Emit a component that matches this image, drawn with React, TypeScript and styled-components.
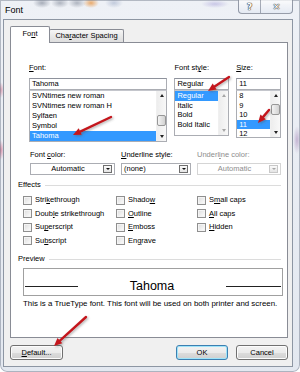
import React from "react";
import styled, { createGlobalStyle } from "styled-components";

const GlobalStyle = createGlobalStyle`
  * { box-sizing: border-box; }
  html, body { margin: 0; padding: 0; background: #ffffff; }
  body {
    font-family: "Liberation Sans", Arial, sans-serif;
    font-size: 7.5px;
    line-height: 10px;
    color: #000;
  }
`;

const Window = styled.div`
  position: relative;
  width: 300px;
  height: 372px;
  display: flex;
  flex-direction: column;
  padding: 0 7px 5px 3px;
  border-radius: 0 0 7px 7px;
  background:
    radial-gradient(ellipse 9px 5px at 42px 3px, rgba(80, 90, 110, 0.45), transparent),
    radial-gradient(ellipse 9px 5px at 60px 3px, rgba(80, 90, 110, 0.4), transparent),
    radial-gradient(ellipse 9px 5px at 77px 3px, rgba(80, 90, 110, 0.4), transparent),
    radial-gradient(ellipse 8px 5px at 91px 3px, rgba(230, 140, 50, 0.7), transparent),
    radial-gradient(ellipse 9px 5px at 114px 3px, rgba(110, 130, 170, 0.35), transparent),
    radial-gradient(ellipse 14px 4px at 215px 4px, rgba(130, 120, 200, 0.35), transparent),
    radial-gradient(ellipse 3px 8px at 1px 90px, rgba(200, 90, 120, 0.5), transparent),
    radial-gradient(ellipse 3px 10px at 1px 150px, rgba(200, 60, 100, 0.5), transparent),
    radial-gradient(ellipse 4px 14px at 297px 140px, rgba(150, 110, 170, 0.45), transparent),
    linear-gradient(180deg, #eef1f6 0%, #e3e8f0 100%);
  box-shadow: inset 0 0 0 1px rgba(70, 80, 100, 0.35);
`;

const TitleBar = styled.div`
  height: 19px;
  display: flex;
  align-items: flex-start;
`;

const Title = styled.span`
  margin: 5px 0 0 2px;
  font-size: 9px;
  line-height: 10px;
`;

const Caption = styled.div`
  margin-left: auto;
  display: flex;
  height: 14px;
  border: 1px solid rgba(70, 80, 100, 0.55);
  border-top: none;
  border-radius: 0 0 4px 4px;
  background: linear-gradient(180deg, rgba(255, 255, 255, 0.7), rgba(222, 229, 240, 0.6));
  overflow: hidden;
`;

const CaptionButton = styled.div<{ $w: number }>`
  width: ${(p) => p.$w}px;
  display: flex;
  align-items: center;
  justify-content: center;
  font-family: "DejaVu Sans", sans-serif;
  font-weight: bold;
  font-size: 9px;
  color: #fff;
  text-shadow: 0 0 1px #333, 0 0 1px #333, 0 0 1px #333;
  & + & {
    border-left: 1px solid rgba(70, 80, 100, 0.45);
  }
`;

const Client = styled.div`
  flex: 1;
  display: flex;
  flex-direction: column;
  background: #f0f0f0;
  border: 1px solid #8d96a3;
  padding: 6px 4px 6px 6px;
`;

const TabStrip = styled.div`
  height: 17px;
  display: flex;
  align-items: flex-end;
  position: relative;
  z-index: 1;
`;

const Tab = styled.div<{ $active?: boolean; $w: number }>`
  width: ${(p) => p.$w}px;
  height: ${(p) => (p.$active ? 17 : 13)}px;
  margin-bottom: ${(p) => (p.$active ? 0 : 1)}px;
  margin-left: ${(p) => (p.$active ? 0 : -1)}px;
  display: flex;
  align-items: center;
  justify-content: center;
  border: 1px solid #898c95;
  border-bottom: none;
  border-radius: 2px 2px 0 0;
  background: ${(p) =>
    p.$active ? "#fff" : "linear-gradient(180deg, #f6f6f6 0%, #e7e7e7 55%, #dedede 100%)"};
  padding-bottom: ${(p) => (p.$active ? 2 : 0)}px;
`;

const Panel = styled.div`
  flex: 1;
  margin-top: -1px;
  background: #fff;
  border: 1px solid #898c95;
  display: flex;
  flex-direction: column;
  padding: 20px 6px 0 7px;
`;

const Key = styled.span`
  text-decoration: underline;
`;

const FieldRow = styled.div<{ $left: number; $gap: number; $top?: number }>`
  display: flex;
  gap: ${(p) => p.$gap}px;
  margin-left: ${(p) => p.$left}px;
  margin-top: ${(p) => p.$top ?? 0}px;
  align-items: flex-start;
`;

const Field = styled.div<{ $w: number }>`
  width: ${(p) => p.$w}px;
  display: flex;
  flex-direction: column;
`;

const Label = styled.div<{ $disabled?: boolean; $gap: number }>`
  height: 10px;
  margin-bottom: ${(p) => p.$gap}px;
  color: ${(p) => (p.$disabled ? "#8d8d8d" : "#000")};
  white-space: nowrap;
`;

const TextBox = styled.div`
  height: 12px;
  border: 1px solid #abadb3;
  border-top-color: #8e929c;
  padding: 0 2px;
  line-height: 10px;
`;

const ListBox = styled.div<{ $h: number }>`
  height: ${(p) => p.$h}px;
  border: 1px solid #abadb3;
  border-top-color: #c4c6cc;
  display: flex;
`;

const Items = styled.div`
  flex: 1;
  display: flex;
  flex-direction: column;
  min-width: 0;
`;

const Item = styled.div<{ $h: number; $selected?: boolean }>`
  height: ${(p) => p.$h}px;
  line-height: ${(p) => p.$h}px;
  padding-left: 2px;
  white-space: nowrap;
  background: ${(p) => (p.$selected ? "#3399ff" : "transparent")};
  color: ${(p) => (p.$selected ? "#fff" : "#000")};
`;

const ScrollBar = styled.div`
  width: 10px;
  display: flex;
  flex-direction: column;
  background: linear-gradient(90deg, #ededed, #f8f8f8);
  border-left: 1px solid #f0f0f0;
`;

const ScrollArrow = styled.div<{ $down?: boolean; $disabled?: boolean }>`
  height: 9px;
  display: flex;
  align-items: center;
  justify-content: center;
  &::before {
    content: "";
    border-left: 2.5px solid transparent;
    border-right: 2.5px solid transparent;
    ${(p) => (p.$down ? "border-top" : "border-bottom")}: 3px solid
      ${(p) => (p.$disabled ? "#a6a6a6" : "#222")};
  }
`;

const Track = styled.div`
  flex: 1;
  display: flex;
  flex-direction: column;
`;

const Thumb = styled.div<{ $top: number }>`
  margin-top: ${(p) => p.$top}px;
  height: 11px;
  border: 1px solid #979797;
  border-radius: 2px;
  background: linear-gradient(90deg, #f4f4f4, #e2e2e2 50%, #d2d2d2);
`;

const Dropdown = styled.div<{ $disabled?: boolean }>`
  height: 12px;
  display: flex;
  align-items: center;
  border: 1px solid ${(p) => (p.$disabled ? "#d5d5d5" : "#abadb3")};
  color: ${(p) => (p.$disabled ? "#8d8d8d" : "#000")};
`;

const DropText = styled.div<{ $center?: boolean }>`
  flex: 1;
  padding-left: 2px;
  text-align: ${(p) => (p.$center ? "center" : "left")};
  line-height: 10px;
`;

const DropButton = styled.div<{ $disabled?: boolean }>`
  width: 9px;
  height: 8px;
  margin-right: 2px;
  display: flex;
  align-items: center;
  justify-content: center;
  border: 1px solid ${(p) => (p.$disabled ? "#c8c8c8" : "#6f6f6f")};
  background: linear-gradient(180deg, #fbfbfb, #e4e4e4);
  &::before {
    content: "";
    border-left: 2px solid transparent;
    border-right: 2px solid transparent;
    border-top: 2.5px solid ${(p) => (p.$disabled ? "#a6a6a6" : "#111")};
  }
`;

const GroupHeading = styled.div<{ $top: number }>`
  height: 10px;
  margin-top: ${(p) => p.$top}px;
  display: flex;
  align-items: center;
  &::after {
    content: "";
    flex: 1;
    margin-left: 4px;
    border-top: 1px solid #dcdcdc;
  }
`;

const EffectsGrid = styled.div`
  display: grid;
  grid-template-columns: 93px 81px 1fr;
  grid-template-rows: repeat(4, 13.5px);
  grid-auto-flow: column;
  margin: 3.5px 0 0 5px;
`;

const Check = styled.div`
  display: flex;
  align-items: center;
  white-space: nowrap;
`;

const CheckBox = styled.span`
  width: 9px;
  height: 9px;
  margin-right: 3px;
  border: 1px solid #8f8f8f;
  background: linear-gradient(135deg, #dcdcdc, #fefefe);
  box-shadow: inset 0 0 0 1px #f4f4f4;
`;

const PreviewBox = styled.div`
  width: 260px;
  height: 28px;
  margin: 4px 0 0 5px;
  border: 1px solid #a0a0a0;
  display: flex;
  align-items: flex-end;
  justify-content: space-between;
  padding: 0 1px 8px;
`;

const Rule = styled.div<{ $w: number }>`
  width: ${(p) => p.$w}px;
  height: 1px;
  background: #222;
`;

const PreviewText = styled.div`
  font-size: 12.5px;
  line-height: 14px;
  margin-bottom: -6px;
`;

const Description = styled.div`
  margin: 3px 0 0 5px;
  font-size: 7.9px;
  white-space: nowrap;
`;

const ButtonRow = styled.div`
  height: 15px;
  margin-top: 7px;
  display: flex;
  gap: 8px;
`;

const Button = styled.div<{ $default?: boolean; $push?: boolean }>`
  width: ${(p) => (p.$push ? 52 : 53)}px;
  margin-left: ${(p) => (p.$push && p.$default ? "auto" : "0")};
  display: flex;
  align-items: center;
  justify-content: center;
  border: 1px solid ${(p) => (p.$default ? "#3c7fb1" : "#707070")};
  border-radius: 3px;
  background: linear-gradient(180deg, #f2f2f2 0%, #ebebeb 50%, #dddddd 51%, #cfcfcf 100%);
  box-shadow: inset 0 0 0 1px ${(p) => (p.$default ? "#9ee4fa" : "#fcfcfc")};
`;

const Overlay = styled.svg`
  position: absolute;
  left: 0;
  top: 0;
  pointer-events: none;
`;

type ArrowProps = { x1: number; y1: number; x2: number; y2: number };

const arrows: ArrowProps[] = [
  { x1: 111, y1: 117, x2: 73, y2: 135 },
  { x1: 229, y1: 77, x2: 208, y2: 91 },
  { x1: 269, y1: 110, x2: 258, y2: 123 },
  { x1: 86, y1: 317, x2: 54, y2: 346 },
];

function Arrow({ x1, y1, x2, y2 }: ArrowProps) {
  const len = Math.hypot(x2 - x1, y2 - y1);
  const ux = (x2 - x1) / len;
  const uy = (y2 - y1) / len;
  const bx = x2 - ux * 8;
  const by = y2 - uy * 8;
  const nx = -uy * 3.6;
  const ny = ux * 3.6;
  return (
    <g>
      <line x1={x1} y1={y1} x2={bx} y2={by} stroke="#c4151c" strokeWidth={2.4} strokeLinecap="round" />
      <polygon points={`${x2},${y2} ${bx + nx},${by + ny} ${bx - nx},${by - ny}`} fill="#c4151c" />
    </g>
  );
}

const fonts = ["SVNtimes new roman", "SVNtimes new roman H", "Sylfaen", "Symbol", "Tahoma"];
const styles = ["Regular", "Italic", "Bold", "Bold Italic"];
const sizes = ["8", "9", "10", "11", "12"];

const effects: [string, string, string][] = [
  ["Stri", "k", "ethrough"],
  ["Doub", "l", "e strikethrough"],
  ["Su", "p", "erscript"],
  ["Su", "b", "script"],
  ["Shado", "w", ""],
  ["", "O", "utline"],
  ["", "E", "mboss"],
  ["En", "g", "rave"],
  ["S", "m", "all caps"],
  ["", "A", "ll caps"],
  ["", "H", "idden"],
];

function ListScroll({ thumb, disabled }: { thumb?: number; disabled?: boolean }) {
  return (
    <ScrollBar>
      <ScrollArrow $disabled={disabled} />
      <Track>{thumb !== undefined && <Thumb $top={thumb} />}</Track>
      <ScrollArrow $down $disabled={disabled} />
    </ScrollBar>
  );
}

export default function App() {
  return (
    <>
      <GlobalStyle />
      <Window>
        <TitleBar>
          <Title>Font</Title>
          <Caption>
            <CaptionButton $w={21}>?</CaptionButton>
            <CaptionButton $w={32}>✕</CaptionButton>
          </Caption>
        </TitleBar>
        <Client>
          <TabStrip>
            <Tab $active $w={40}>
              Fo<Key>n</Key>t
            </Tab>
            <Tab $w={75}>
              Cha<Key>r</Key>acter Spacing
            </Tab>
          </TabStrip>
          <Panel>
            <FieldRow $left={11} $gap={7}>
              <Field $w={139}>
                <Label $gap={5}>
                  <Key>F</Key>ont:
                </Label>
                <TextBox>Tahoma</TextBox>
                <ListBox $h={52}>
                  <Items>
                    {fonts.map((f) => (
                      <Item key={f} $h={10} $selected={f === "Tahoma"}>
                        {f}
                      </Item>
                    ))}
                  </Items>
                  <ListScroll thumb={15} />
                </ListBox>
              </Field>
              <Field $w={55}>
                <Label $gap={5}>
                  Font st<Key>y</Key>le:
                </Label>
                <TextBox>Regular</TextBox>
                <ListBox $h={46}>
                  <Items>
                    {styles.map((s) => (
                      <Item key={s} $h={9.5} $selected={s === "Regular"}>
                        {s}
                      </Item>
                    ))}
                  </Items>
                  <ListScroll disabled />
                </ListBox>
              </Field>
              <Field $w={45}>
                <Label $gap={5}>
                  <Key>S</Key>ize:
                </Label>
                <TextBox>11</TextBox>
                <ListBox $h={48}>
                  <Items>
                    {sizes.map((s) => (
                      <Item key={s} $h={9.5} $selected={s === "11"}>
                        {s}
                      </Item>
                    ))}
                  </Items>
                  <ListScroll thumb={4} />
                </ListBox>
              </Field>
            </FieldRow>

            <FieldRow $left={12} $gap={6} $top={8}>
              <Field $w={85}>
                <Label $gap={3}>
                  Font <Key>c</Key>olor:
                </Label>
                <Dropdown>
                  <DropText $center>Automatic</DropText>
                  <DropButton />
                </Dropdown>
              </Field>
              <Field $w={70}>
                <Label $gap={3}>
                  <Key>U</Key>nderline style:
                </Label>
                <Dropdown>
                  <DropText>(none)</DropText>
                  <DropButton />
                </Dropdown>
              </Field>
              <Field $w={84}>
                <Label $gap={3} $disabled>
                  Underl<Key>i</Key>ne color:
                </Label>
                <Dropdown $disabled>
                  <DropText $center>Automatic</DropText>
                  <DropButton $disabled />
                </Dropdown>
              </Field>
            </FieldRow>

            <GroupHeading $top={5}>Effects</GroupHeading>
            <EffectsGrid>
              {effects.map(([a, k, b]) => (
                <Check key={a + k + b}>
                  <CheckBox />
                  {a}
                  <Key>{k}</Key>
                  {b}
                </Check>
              ))}
            </EffectsGrid>

            <GroupHeading $top={6.5}>Preview</GroupHeading>
            <PreviewBox>
              <Rule $w={53} />
              <PreviewText>Tahoma</PreviewText>
              <Rule $w={55} />
            </PreviewBox>
            <Description>
              This is a TrueType font. This font will be used on both printer and screen.
            </Description>
          </Panel>
          <ButtonRow>
            <Button>
              <Key>D</Key>efault...
            </Button>
            <Button $push $default>
              OK
            </Button>
            <Button $push>Cancel</Button>
          </ButtonRow>
        </Client>
        <Overlay width={300} height={372}>
          <defs>
            <filter id="arrowShadow" x="-20%" y="-20%" width="140%" height="140%">
              <feDropShadow dx="1.2" dy="1.2" stdDeviation="1" floodColor="#555" floodOpacity="0.45" />
            </filter>
          </defs>
          <g filter="url(#arrowShadow)">
            {arrows.map((a, i) => (
              <Arrow key={i} {...a} />
            ))}
          </g>
        </Overlay>
      </Window>
    </>
  );
}
